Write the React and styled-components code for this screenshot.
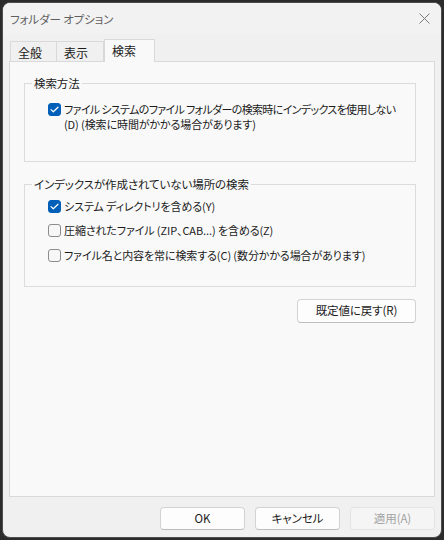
import React from "react";
import styled, { createGlobalStyle } from "styled-components";

const GlobalStyle = createGlobalStyle`
  html, body {
    margin: 0;
    padding: 0;
    background: #2b2b2b;
  }
  body {
    font-family: "Noto Sans CJK JP", "Noto Sans", sans-serif;
    font-size: 11px;
    letter-spacing: -0.1px;
    color: #1b1b1b;
    font-feature-settings: "palt";
  }
`;

const Window = styled.div`
  margin: 2px 0 0 2px;
  width: 438px;
  height: 534px;
  border: 1px solid #4d4d4d;
  border-radius: 8px;
  background: #f0f0f0;
  overflow: hidden;
  display: flex;
  flex-direction: column;
`;

const TitleBar = styled.div`
  height: 31px;
  display: flex;
  align-items: center;
  justify-content: space-between;
  padding-left: 7px;
  background: #f2f2f2;
  color: #606060;
  font-size: 11.5px;
`;

const CloseButton = styled.div`
  width: 24px;
  height: 18px;
  margin-right: 5px;
  display: flex;
  align-items: center;
  justify-content: center;
`;

const Body = styled.div`
  flex: 1;
  display: flex;
  flex-direction: column;
  padding: 4px 6px 0 6px;
`;

const TabStrip = styled.div`
  display: flex;
  align-items: flex-end;
  height: 23px;
  padding-left: 1px;
`;

const Tab = styled.div`
  width: ${(p) => p.$w}px;
  height: ${(p) => (p.$active ? 23 : 20)}px;
  box-sizing: border-box;
  padding-left: 7px;
  padding-top: ${(p) => (p.$active ? 0 : 2)}px;
  display: flex;
  align-items: center;
  border: 1px solid #d9d9d9;
  border-bottom: none;
  border-left-width: ${(p) => (p.$first || p.$active ? 1 : 0)}px;
  background: ${(p) => (p.$active ? "#f9f9f9" : "#f0f0f0")};
  margin-bottom: ${(p) => (p.$active ? -1 : 0)}px;
  position: relative;
  z-index: ${(p) => (p.$active ? 1 : 0)};
  line-height: 1;
  font-size: 12px;
`;

const Panel = styled.div`
  width: 426px;
  height: 436px;
  box-sizing: border-box;
  border: 1px solid #d9d9d9;
  background: #f9f9f9;
  padding: 14px 18px 0 14px;
  display: flex;
  flex-direction: column;
`;

const Group = styled.fieldset`
  margin: 0 0 ${(p) => p.$mb || 0}px 0;
  padding: 0 0 0 7px;
  border: 1px solid #dcdcdc;
  height: ${(p) => p.$h}px;
  box-sizing: border-box;
  min-width: 0;
`;

const Legend = styled.legend`
  padding: 0 2px;
  line-height: 14px;
  font-size: 11.5px;
  color: #1b1b1b;
`;

const Row = styled.label`
  display: flex;
  align-items: flex-start;
  gap: 3px;
  margin-left: 16px;
  margin-top: ${(p) => p.$mt}px;
  line-height: 15px;
  white-space: nowrap;
`;

const Line = styled.span`
  display: block;
  letter-spacing: ${(p) => (p.$tight ? "-0.65px" : "-0.1px")};
`;

const Box = styled.span`
  flex: none;
  width: 13px;
  height: 13px;
  box-sizing: border-box;
  border-radius: 3px;
  margin-top: 1px;
  display: flex;
  align-items: center;
  justify-content: center;
  background: ${(p) => (p.$checked ? "#005fb8" : "#f7f7f7")};
  border: 1px solid ${(p) => (p.$checked ? "#005fb8" : "#8b8b8b")};
`;

const Actions = styled.div`
  display: flex;
  justify-content: flex-end;
  margin-top: 12px;
`;

const Button = styled.button`
  font: inherit;
  font-size: 11.5px;
  letter-spacing: -0.1px;
  font-feature-settings: "palt";
  width: ${(p) => p.$w}px;
  height: ${(p) => p.$h}px;
  border: 1px solid ${(p) => (p.disabled ? "#e3e3e3" : "#d3d3d3")};
  border-bottom-color: ${(p) => (p.disabled ? "#e3e3e3" : "#bdbdbd")};
  border-radius: 4px;
  background: ${(p) => (p.disabled ? "#f5f5f5" : "#fdfdfd")};
  color: ${(p) => (p.disabled ? "#a3a3a3" : "#1b1b1b")};
  padding: 0;
  line-height: 1;
`;

const Footer = styled.div`
  display: flex;
  justify-content: flex-end;
  gap: 10px;
  margin-top: 10px;
`;

function Check({ checked }) {
  return (
    <Box $checked={checked}>
      {checked && (
        <svg width="9" height="7" viewBox="0 0 9 7">
          <path
            d="M1 3.6 L3.3 5.8 L8 1.2"
            fill="none"
            stroke="#fff"
            strokeWidth="1.2"
            strokeLinecap="round"
            strokeLinejoin="round"
          />
        </svg>
      )}
    </Box>
  );
}

export default function App() {
  return (
    <>
      <GlobalStyle />
      <Window>
        <TitleBar>
          <span>フォルダー オプション</span>
          <CloseButton>
            <svg width="11" height="11" viewBox="0 0 11 11">
              <path d="M0.5 0.5 L10.5 10.5 M10.5 0.5 L0.5 10.5" stroke="#7a7a7a" strokeWidth="1" />
            </svg>
          </CloseButton>
        </TitleBar>
        <Body>
          <TabStrip>
            <Tab $w={47} $first>全般</Tab>
            <Tab $w={47}>表示</Tab>
            <Tab $w={51} $active>検索</Tab>
          </TabStrip>
          <Panel>
            <Group $h={86} $mb={15}>
              <Legend>検索方法</Legend>
              <Row $mt={12}>
                <Check checked />
                <span>
                  <Line $tight>ファイル システムのファイル フォルダーの検索時にインデックスを使用しない</Line>
                  <Line>(D) (検索に時間がかかる場合があります)</Line>
                </span>
              </Row>
            </Group>
            <Group $h={110}>
              <Legend>インデックスが作成されていない場所の検索</Legend>
              <Row $mt={8}>
                <Check checked />
                <span>システム ディレクトリを含める(Y)</span>
              </Row>
              <Row $mt={9}>
                <Check />
                <span>圧縮されたファイル (ZIP、CAB...) を含める(Z)</span>
              </Row>
              <Row $mt={10}>
                <Check />
                <span>ファイル名と内容を常に検索する(C) (数分かかる場合があります)</span>
              </Row>
            </Group>
            <Actions>
              <Button $w={119} $h={24}>既定値に戻す(R)</Button>
            </Actions>
          </Panel>
          <Footer>
            <Button $w={85} $h={23}>OK</Button>
            <Button $w={85} $h={23}>キャンセル</Button>
            <Button $w={85} $h={23} disabled>適用(A)</Button>
          </Footer>
        </Body>
      </Window>
    </>
  );
}
